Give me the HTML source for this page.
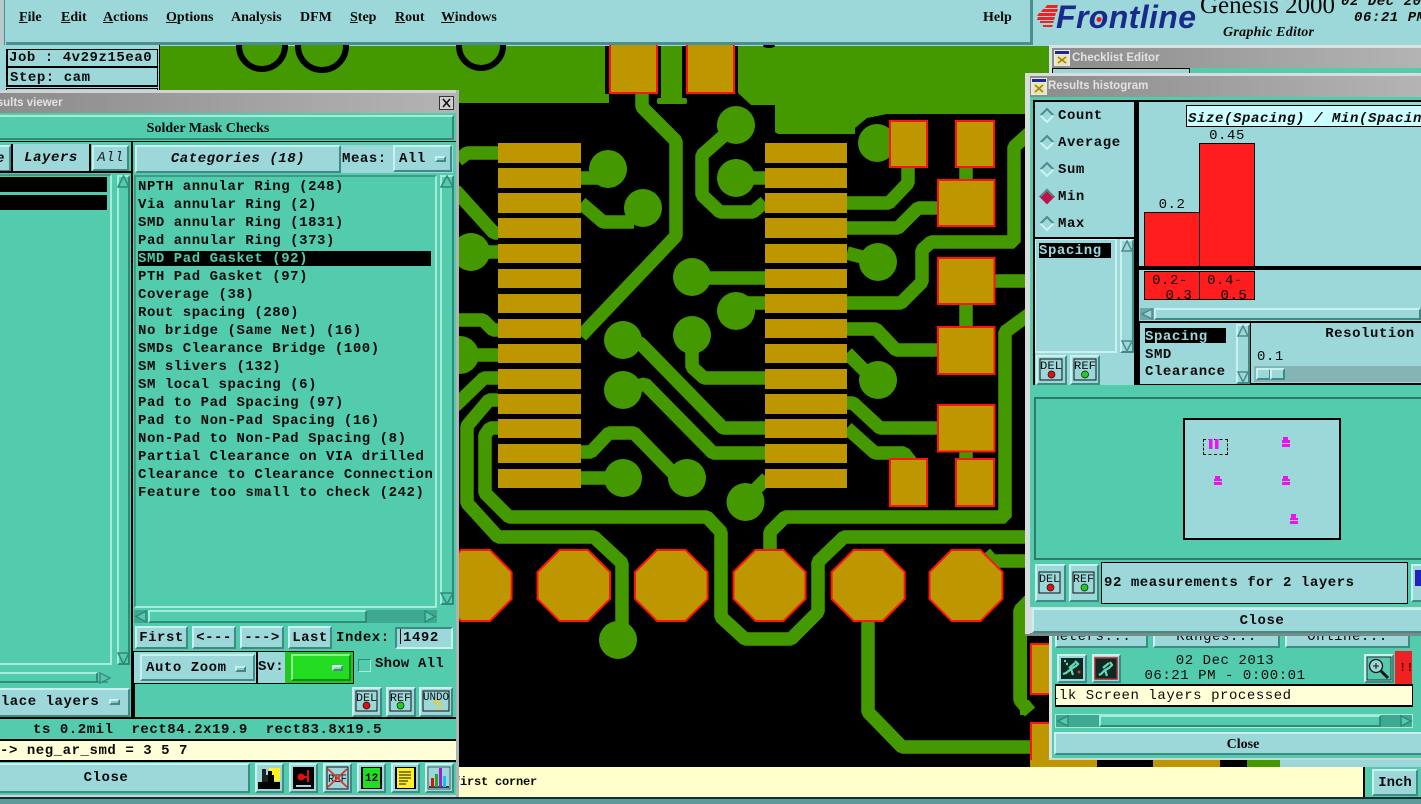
<!DOCTYPE html>
<html><head><meta charset="utf-8"><title>Genesis 2000</title>
<style>
html,body{margin:0;padding:0;background:#9cd8d9}
#p{position:relative;width:1421px;height:804px;overflow:hidden;background:#9cd8d9}
#p div,#p svg{position:absolute;box-sizing:border-box}
.t{font:bold 14px/18px "Liberation Mono",monospace;letter-spacing:.55px;white-space:pre;color:#0a0a0a}
.n{font-weight:normal}
.i{font-style:italic}
.s{font:bold 14px/18px "Liberation Serif",serif;white-space:pre;color:#0a0a0a}
.r{border:2px solid;border-color:#c9f1ef #3f8a84 #3f8a84 #c9f1ef;background:#9cd8d9}
.rm{border:2px solid;border-color:#a5ebd8 #2f8a78 #2f8a78 #a5ebd8;background:#53cbad}
.L{background:#9cd8d9}.M{background:#53cbad}.K{background:#000}
.c{text-align:center}
.title{background:linear-gradient(90deg,#8c8c8c,#b4b4b4);font:bold 11.5px/20px "Liberation Sans",sans-serif;color:#e2e2e2;white-space:pre}
u{text-decoration:underline}
</style></head><body><div id="p">

<!-- PCB -->
<svg style="left:0;top:0" width="1421" height="804" viewBox="0 0 1421 804">
<rect x="160" y="46" width="1261" height="722" fill="#000"/>
<path d="M160 46H609V103H160Z" fill="#449900"/>
<path d="M738 46H1060V114H887L867 118L855 128V134H778L775 132V105H751L738 93Z" fill="#449900"/>
<rect x="605" y="46" width="133" height="48" fill="#000"/>
<rect x="661" y="46" width="21" height="55" fill="#449900"/>
<rect x="657" y="98" width="30" height="6" rx="2" fill="#449900"/>
<g fill="#449900" stroke="#000" stroke-width="6"><circle cx="262" cy="46" r="23"/><circle cx="322" cy="46" r="24"/><circle cx="481" cy="46" r="22"/></g>
<ellipse cx="769" cy="46" rx="6" ry="2" fill="#000"/>
<g fill="none" stroke="#449900" stroke-width="13.500" stroke-linejoin="bevel">
<path d="M642 90V107L676 141V236L581 336"/>
<path d="M498 153H467L458 160"/>
<path d="M581 178H608"/>
<path d="M581 203L603 222H634"/>
<path d="M728 132L702 155V195L720 212H753L765 202"/>
<path d="M736 178H765"/>
<path d="M455 190L494 233H498"/>
<path d="M471 252H498"/>
<path d="M455 320H483L493 330H498"/>
<path d="M460 355H498"/>
<path d="M498 378H484L455 406"/>
<path d="M498 400H489L467 426V503L498 537H594L622 563V640"/>
<path d="M498 428H490L485 435V493L509 517H707L721 532V617L745 639H791L818 612V562L844 537H1040"/>
<path d="M581 452H591L609 433H634L675 475L687 478"/>
<path d="M581 478H624"/>
<path d="M745 502L755 490L767 478"/>
<path d="M623 340L640 343L723 428H765"/>
<path d="M623 390L645 384L713 453H765"/>
<path d="M692 278H765"/>
<path d="M736 311L748 303H765"/>
<path d="M692 335V367L704 378H765"/>
<path d="M908 160V183L889 203H847"/>
<path d="M966 160V190"/>
<path d="M966 300V330"/>
<path d="M966 445V465"/>
<path d="M847 228H898L918 208H940"/>
<path d="M1035 128L1014 147V242H931L922 250V282L901 303H847"/>
<path d="M847 253L862 257L878 262"/>
<path d="M990 281H1040"/>
<path d="M847 353L867 373L878 380"/>
<path d="M847 329H876L896 350H940"/>
<path d="M847 403H853L880 428H940"/>
<path d="M847 428L875 453H904L911 462"/>
<path d="M1035 310L1005 332V517H785L770 532V555"/>
<path d="M868 615V712L902 747H1040"/>
<path d="M985 553L992 561H1040"/>
<path d="M1030 600L1020 610V700L1030 712"/>
</g>
<g fill="#449900">
<circle cx="608" cy="169" r="19"/><circle cx="643" cy="208" r="19"/><circle cx="736" cy="125" r="19"/><circle cx="736" cy="178" r="19"/>
<circle cx="471" cy="252" r="19"/><circle cx="460" cy="355" r="19"/><circle cx="692" cy="277" r="19"/><circle cx="736" cy="311" r="19"/>
<circle cx="623" cy="340" r="19"/><circle cx="692" cy="335" r="19"/><circle cx="623" cy="390" r="19"/><circle cx="623" cy="478" r="19"/>
<circle cx="687" cy="478" r="19"/><circle cx="745.5" cy="502" r="19"/><circle cx="618" cy="640" r="19"/><circle cx="877" cy="143" r="19"/>
<circle cx="878" cy="262" r="19"/><circle cx="878" cy="380" r="19"/>
</g>
<g fill="#bd9600">
<rect x="498" y="143" width="83" height="20"/><rect x="498" y="168" width="83" height="20"/><rect x="498" y="193" width="83" height="20"/><rect x="498" y="218" width="83" height="20"/><rect x="498" y="244" width="83" height="19"/><rect x="498" y="269" width="83" height="19"/><rect x="498" y="294" width="83" height="19"/><rect x="498" y="319" width="83" height="19"/><rect x="498" y="344" width="83" height="19"/><rect x="498" y="369" width="83" height="20"/><rect x="498" y="394" width="83" height="20"/><rect x="498" y="419" width="83" height="19"/><rect x="498" y="444" width="83" height="19"/><rect x="498" y="469" width="83" height="19"/>
<rect x="765" y="143" width="82" height="20"/><rect x="765" y="168" width="82" height="20"/><rect x="765" y="193" width="82" height="20"/><rect x="765" y="218" width="82" height="20"/><rect x="765" y="244" width="82" height="19"/><rect x="765" y="269" width="82" height="19"/><rect x="765" y="294" width="82" height="19"/><rect x="765" y="319" width="82" height="19"/><rect x="765" y="344" width="82" height="19"/><rect x="765" y="369" width="82" height="20"/><rect x="765" y="394" width="82" height="20"/><rect x="765" y="419" width="82" height="19"/><rect x="765" y="444" width="82" height="19"/><rect x="765" y="469" width="82" height="19"/>
</g>
<g fill="#bd9600" stroke="#ff1212" stroke-width="2">
<rect x="610" y="40" width="47" height="53"/><rect x="687" y="40" width="47" height="53"/>
<rect x="890" y="121" width="37" height="46"/><rect x="956" y="121" width="38" height="46"/>
<rect x="938" y="180" width="56.5" height="46"/><rect x="938" y="258" width="56.5" height="46"/><rect x="938" y="327" width="56.5" height="47"/><rect x="938" y="405" width="56.5" height="46.500"/>
<rect x="890" y="459" width="37" height="47"/><rect x="956" y="459" width="38" height="47"/>
<path d="M439 572L461 550H490L511.600 572V599L490 621H461L439 599Z"/>
<path d="M537.500 572L559.500 550H588L610 572V599L588 621H559.500L537.500 599Z"/>
<path d="M635 572L657 550H685.600L707.600 572V599L685.600 621H657L635 599Z"/>
<path d="M733.500 572L755.500 550H783.500L805.500 572V599L783.500 621H755.500L733.500 599Z"/>
<path d="M831.600 572L853.600 550H882.700L904.700 572V599L882.700 621H853.600L831.600 599Z"/>
<path d="M929.500 572L951.500 550H980.500L1002.500 572V599L980.500 621H951.500L929.500 599Z"/>
</g>
<rect x="1020" y="630" width="7" height="85" fill="#449900"/>
<rect x="1027" y="640" width="30" height="60" fill="#000"/>
<rect x="1031" y="644" width="30" height="50" fill="#bd9600" stroke="#ff1212" stroke-width="2"/>
<rect x="1031" y="723" width="30" height="50" fill="#bd9600" stroke="#ff1212" stroke-width="2"/>
<rect x="1030" y="760" width="67" height="8" fill="#bd9600"/><rect x="1153" y="760" width="67" height="8" fill="#bd9600"/><rect x="1247" y="760" width="33" height="8" fill="#449900"/><rect x="1280" y="760" width="141" height="8" fill="#9cd8d9"/>
</svg>

<!-- Menu bar -->
<div class="L" style="left:0;top:0;width:1421px;height:45px"></div>
<div style="left:0;top:0;width:5px;height:46px;background:#b9c9c9;border-right:1px solid #4a8f8e"></div>
<div style="left:6px;top:42px;width:1024px;height:3px;background:#4a8f8e"></div>
<div style="left:1030px;top:0;width:3px;height:45px;background:#4a8f8e"></div>
<div class="s" style="left:19px;top:9px"><u>F</u>ile</div>
<div class="s" style="left:61px;top:9px"><u>E</u>dit</div>
<div class="s" style="left:103px;top:9px"><u>A</u>ctions</div>
<div class="s" style="left:166px;top:9px"><u>O</u>ptions</div>
<div class="s" style="left:231px;top:9px">Analysis</div>
<div class="s" style="left:300px;top:9px">DFM</div>
<div class="s" style="left:350px;top:9px"><u>S</u>tep</div>
<div class="s" style="left:395px;top:9px"><u>R</u>out</div>
<div class="s" style="left:441px;top:9px"><u>W</u>indows</div>
<div class="s" style="left:983px;top:9px">Help</div>

<svg style="left:1033px;top:0" width="388" height="45" viewBox="1033 0 388 45">
<g fill="#ee2222"><path d="M1047 5H1058L1057 8H1045Z"/><path d="M1043 9H1058L1057 12H1041Z"/><path d="M1039 13H1056L1055 16H1037Z"/><path d="M1038 17H1055L1054 20H1037Z"/><path d="M1040 21H1054L1053 23H1040Z"/><path d="M1043 25H1053L1052 27H1043Z"/></g>
<text x="1056" y="28" font-family="Liberation Sans" font-weight="bold" font-style="italic" font-size="32" fill="#1a2a8c" textLength="140">Frontline</text>
<circle cx="1099" cy="19.500" r="2.500" fill="#e81818"/>
<text x="1200" y="13" font-family="Liberation Serif" font-size="25" fill="#0a0a0a" textLength="135">Genesis 2000</text>
<text x="1223" y="36" font-family="Liberation Serif" font-weight="bold" font-style="italic" font-size="14" fill="#0a0a0a" textLength="91">Graphic Editor</text>
<text x="1341" y="5" font-family="Liberation Mono" font-weight="bold" font-style="italic" font-size="14" fill="#0a0a0a" letter-spacing=".55">02 Dec 2013</text>
<text x="1354" y="21" font-family="Liberation Mono" font-weight="bold" font-style="italic" font-size="14" fill="#0a0a0a" letter-spacing=".55">06:21 PM</text>
</svg>

<!-- Job box -->
<div class="L" style="left:0;top:45px;width:160px;height:50px;border-right:1px solid #000"></div>
<div style="left:6px;top:49px;width:152px;height:38px;border:1px solid #000;background:#000"></div>
<div class="L" style="left:8px;top:50px;width:149px;height:16px"></div>
<div class="L" style="left:8px;top:68px;width:149px;height:17px"></div>
<div class="t" style="left:9px;top:49px">Job : 4v29z15ea0</div>
<div class="t" style="left:10px;top:69px">Step: cam</div>
<div style="left:6px;top:88px;width:152px;height:5px;border:1px solid #000"></div>

<!-- Bottom bar -->
<div style="left:459px;top:767px;width:904px;height:30px;background:#ffffcc;border-right:0"></div>
<div class="t" style="left:453px;top:773px;font-size:12px;letter-spacing:-.2px">first corner</div>
<div class="K" style="left:1363px;top:767px;width:2px;height:31px"></div>
<div class="M" style="left:1365px;top:767px;width:56px;height:31px"></div>
<div class="r t c" style="left:1372px;top:769px;width:46px;height:27px;line-height:25px;letter-spacing:0">Inch</div>
<div style="left:0;top:797px;width:1421px;height:2px;background:#14302e"></div>
<div style="left:0;top:799px;width:1421px;height:5px;background:#5f9a9a"></div>

<!-- Results viewer window -->
<div style="left:0;top:90px;width:459px;height:707px;background:#d2d2d2;border-right:3px solid #aeb4b4"></div>
<div class="title" style="left:0;top:93px;width:456px;height:20px;line-height:20px"> </div>
<div class="title" style="left:-18px;top:93px;width:100px;height:20px;background:none">Results viewer</div>
<div style="left:439px;top:96px;width:15px;height:14px;background:#d0d0d0;border:1px solid #333"></div>
<svg style="left:439px;top:96px" width="15" height="14"><path d="M4 3L11 11M11 3L4 11" stroke="#111" stroke-width="1.6"/></svg>
<div class="M" style="left:0;top:113px;width:456px;height:682px"></div>
<div class="rm" style="left:-2px;top:115px;width:456px;height:25px"></div>
<div class="s c" style="left:0;top:120px;width:416px">Solder Mask Checks</div>
<div class="K" style="left:0;top:141px;width:456px;height:1px"></div>

<!-- left column -->
<div class="K" style="left:131px;top:142px;width:2px;height:576px"></div>
<div class="r" style="left:-8px;top:145px;width:19px;height:27px"></div>
<div class="t i" style="left:-4px;top:150px">e</div>
<div class="L t i c" style="left:13px;top:144px;width:76px;height:27px;line-height:29px">Layers</div>
<div class="r t i n c" style="left:92px;top:145px;width:37px;height:26px;line-height:23px;letter-spacing:.4px;color:#222">All</div>
<div class="K" style="left:0;top:171px;width:131px;height:2px"></div>
<div class="K" style="left:11px;top:144px;width:2px;height:28px"></div>
<div class="K" style="left:89px;top:144px;width:2px;height:28px"></div>
<div style="left:-3px;top:174px;width:115px;height:491px;border:2px solid;border-color:#3f9a88 #a5ebd8 #a5ebd8 #3f9a88"></div>
<div class="K" style="left:0;top:177px;width:107px;height:15px"></div>
<div class="K" style="left:0;top:195px;width:107px;height:15px"></div>
<div class="rm" style="left:117px;top:175px;width:13px;height:490px"></div>
<div style="left:0;top:671px;width:108px;height:12px;border-bottom:2px solid #3f9a88;background:#53cbad"></div>
<div class="rm" style="left:-4px;top:672px;width:102px;height:11px"></div>
<svg style="left:98px;top:672px" width="14" height="12"><path d="M2 1L12 6L2 11Z" fill="#53cbad" stroke="#3f8a84" stroke-width="1.500"/></svg>
<svg style="left:117px;top:175px" width="13" height="13"><path d="M6.500 1L12 12H1Z" fill="#53cbad" stroke="#2f8a78" stroke-width="1.500"/></svg>
<svg style="left:117px;top:652px" width="13" height="13"><path d="M6.500 12L12 1H1Z" fill="#53cbad" stroke="#2f8a78" stroke-width="1.500"/></svg>
<div class="r" style="left:-6px;top:688px;width:136px;height:29px"></div>
<div class="t" style="left:-26px;top:693px">Replace layers</div>
<div class="r" style="left:109px;top:699px;width:11px;height:6px;background:#8cc8c8"></div>

<!-- right column -->
<div class="L" style="left:341px;top:145px;width:112px;height:28px"></div>
<div class="r t i c" style="left:135px;top:145px;width:206px;height:28px;line-height:25px">Categories (18)</div>
<div class="t" style="left:342px;top:150px">Meas:</div>
<div class="r t" style="left:393px;top:145px;width:59px;height:27px;line-height:25px;padding-left:4px">All</div>
<div class="r" style="left:435px;top:156px;width:11px;height:6px;background:#8cc8c8"></div>
<div style="left:134px;top:175px;width:303px;height:433px;border:2px solid;border-color:#3f9a88 #a5ebd8 #a5ebd8 #3f9a88"></div>
<div class="K" style="left:138px;top:251px;width:293px;height:15px"></div>
<div style="left:138px;top:178px;width:294px;height:330px;overflow:hidden"><div class="t" style="left:0;top:0">NPTH annular Ring (248)
Via annular Ring (2)
SMD annular Ring (1831)
Pad annular Ring (373)
<span style="color:#53cbad">SMD Pad Gasket (92)</span>
PTH Pad Gasket (97)
Coverage (38)
Rout spacing (280)
No bridge (Same Net) (16)
SMDs Clearance Bridge (100)
SM slivers (132)
SM local spacing (6)
Pad to Pad Spacing (97)
Pad to Non-Pad Spacing (16)
Non-Pad to Non-Pad Spacing (8)
Partial Clearance on VIA drilled
Clearance to Clearance Connection
Feature too small to check (242)</div></div>
<div class="rm" style="left:440px;top:175px;width:14px;height:430px"></div>
<svg style="left:440px;top:175px" width="14" height="13"><path d="M7 1L13 12H1Z" fill="#53cbad" stroke="#2f8a78" stroke-width="1.500"/></svg>
<svg style="left:440px;top:592px" width="14" height="13"><path d="M7 12L13 1H1Z" fill="#53cbad" stroke="#2f8a78" stroke-width="1.500"/></svg>
<div style="left:134px;top:610px;width:303px;height:13px;background:#3fa892"></div>
<div class="rm" style="left:148px;top:610px;width:219px;height:13px"></div>
<svg style="left:134px;top:610px" width="14" height="13"><path d="M12 1L2 6.500L12 12Z" fill="#53cbad" stroke="#2f8a78" stroke-width="1.500"/></svg>
<svg style="left:423px;top:610px" width="14" height="13"><path d="M2 1L12 6.500L2 12Z" fill="#53cbad" stroke="#2f8a78" stroke-width="1.500"/></svg>
<div class="r t c" style="left:135px;top:626px;width:53px;height:23px;line-height:21px;letter-spacing:.5px">First</div>
<div class="r t c" style="left:192px;top:626px;width:44px;height:23px;line-height:21px;letter-spacing:.5px">&lt;---</div>
<div class="r t c" style="left:240px;top:626px;width:44px;height:23px;line-height:21px;letter-spacing:.5px">---&gt;</div>
<div class="r t c" style="left:288px;top:626px;width:44px;height:23px;line-height:21px;letter-spacing:.5px">Last</div>
<div class="t" style="left:336px;top:629px">Index:</div>
<div class="L" style="left:395px;top:627px;width:58px;height:22px;border:2px solid;border-color:#3f8a84 #c9f1ef #c9f1ef #3f8a84"></div>
<div class="t" style="left:403px;top:629px">1492</div>
<div style="left:400px;top:629px;width:1px;height:15px;background:#111"></div>

<div class="K" style="left:133px;top:651px;width:221px;height:33px"></div>
<div class="L" style="left:134px;top:652px;width:122px;height:31px"></div>
<div class="r t" style="left:140px;top:654px;width:115px;height:27px;line-height:25px;padding-left:4px">Auto Zoom</div>
<div class="r" style="left:235px;top:666px;width:11px;height:6px;background:#8cc8c8"></div>
<div class="L t" style="left:258px;top:652px;width:27px;height:31px;line-height:31px;letter-spacing:.2px">Sv:</div>
<div style="left:285px;top:652px;width:68px;height:31px;background:#22c822"></div>
<div style="left:291px;top:654px;width:60px;height:27px;background:#22dd22;border:2px solid;border-color:#90ee90 #178a17 #178a17 #90ee90"></div>
<div class="r" style="left:332px;top:665px;width:11px;height:6px;background:#9cd8a0"></div>
<div style="left:358px;top:659px;width:13px;height:13px;border:1px solid;border-color:#2f8a78 #a5ebd8 #a5ebd8 #2f8a78"></div>
<div class="t" style="left:375px;top:655px;letter-spacing:.2px">Show All</div>

<!-- DEL REF UNDO -->
<div class="K" style="left:133px;top:684px;width:2px;height:34px"></div>
<div class="r" style="left:352px;top:687px;width:30px;height:30px"></div>
<div class="r" style="left:386px;top:687px;width:30px;height:30px"></div>
<div class="r" style="left:419px;top:687px;width:34px;height:30px"></div>
<svg style="left:352px;top:687px" width="102" height="30" viewBox="352 687 102 30" font-family="Liberation Mono" font-size="11" fill="#111">
<rect x="356" y="691" width="21" height="20" fill="none" stroke="#111"/><text x="356" y="701" textLength="21" lengthAdjust="spacingAndGlyphs">DEL</text><circle cx="366.500" cy="705.500" r="3.500" fill="#e01010" stroke="#111" stroke-width=".7"/>
<rect x="390" y="691" width="21" height="20" fill="none" stroke="#111"/><text x="390" y="701" textLength="21" lengthAdjust="spacingAndGlyphs">REF</text><circle cx="400.500" cy="705.500" r="3.500" fill="#22cc22" stroke="#111" stroke-width=".7"/>
<rect x="423" y="691" width="26" height="20" fill="none" stroke="#111"/><text x="423" y="700" textLength="26" lengthAdjust="spacingAndGlyphs">UNDO</text><path d="M439 702H434L436 700M434 702L436 704M439 702C442 702 442 707 439 707L436 710" fill="none" stroke="#eecc22" stroke-width="1.500"/>
</svg>

<!-- status rows -->
<div class="K" style="left:0;top:717px;width:456px;height:2px"></div>
<div class="t" style="left:33px;top:721px">ts 0.2mil  rect84.2x19.9  rect83.8x19.5</div>
<div class="K" style="left:0;top:739px;width:456px;height:2px"></div>
<div style="left:0;top:741px;width:456px;height:19px;background:#ffffd8"></div>
<div class="t" style="left:0;top:742px">-&gt; neg_ar_smd = 3 5 7</div>
<div class="K" style="left:0;top:760px;width:456px;height:2px"></div>
<div class="r" style="left:-6px;top:763px;width:256px;height:30px"></div>
<div class="t c" style="left:0;top:769px;width:212px">Close</div>

<!-- Bottom icon row -->
<div class="r" style="left:255px;top:763px;width:29px;height:30px"></div>
<div class="r" style="left:289px;top:763px;width:29px;height:30px"></div>
<div class="r" style="left:323px;top:763px;width:29px;height:30px"></div>
<div class="r" style="left:357px;top:763px;width:29px;height:30px"></div>
<div class="r" style="left:391px;top:763px;width:29px;height:30px"></div>
<div class="r" style="left:425px;top:763px;width:29px;height:30px"></div>
<svg style="left:255px;top:763px" width="199" height="30" viewBox="255 763 199 30">
<rect x="258" y="768" width="22" height="21" fill="#9cd8d9"/><rect x="269" y="768" width="11" height="13" fill="#ffee22"/><rect x="258" y="782" width="22" height="7" fill="#000"/><path d="M262 769H266V775H268V782H262Z" fill="#222"/><path d="M268 771H272V775H274V782H268Z" fill="#000"/>
<rect x="293" y="767" width="21" height="22" fill="#000"/><circle cx="301" cy="777" r="3.500" fill="#e01010"/><rect x="304" y="776" width="3" height="2" fill="#e01010"/><rect x="307" y="770" width="2" height="12" fill="#e01010"/><rect x="296" y="785" width="15" height="2" fill="#9cd8d9"/>
<rect x="327" y="767" width="21" height="22" fill="#9cd8d9" stroke="#111"/><text x="328" y="782" font-family="Liberation Mono" font-size="11" fill="#111" textLength="19" lengthAdjust="spacingAndGlyphs">REF</text><path d="M328 769L347 787M347 769L328 787" stroke="#e03030" stroke-width="1.800"/>
<rect x="361" y="767" width="21" height="22" fill="#000"/><rect x="363" y="768" width="17" height="20" fill="#22dd22"/><text x="365" y="781" font-family="Liberation Mono" font-weight="bold" font-size="11" fill="#000">12</text>
<rect x="395" y="767" width="21" height="22" fill="#000"/><rect x="397" y="768" width="17" height="20" fill="#ffee22"/><path d="M399 772H411M399 775H411M399 778H411M399 781H408M399 784H406" stroke="#111"/>
<path d="M429 787H449" stroke="#111" stroke-width="1.500"/><rect x="431" y="778" width="3" height="9" fill="#e01010"/><rect x="435" y="774" width="3" height="13" fill="#22aa22"/><rect x="439" y="768" width="3" height="19" fill="#9922cc"/><rect x="443" y="776" width="3" height="11" fill="#22bbee"/><rect x="428" y="767" width="22" height="22" fill="none" stroke="#111" stroke-width=".6"/>
</svg>

<!-- Checklist Editor window -->
<div style="left:1049px;top:45px;width:372px;height:715px;background:#d8e4e4"></div>
<div class="title" style="left:1052px;top:48px;width:369px;height:20px;padding-left:20px">Checklist Editor</div>
<div class="M" style="left:1052px;top:68px;width:369px;height:690px"></div>
<div style="left:1052px;top:68px;width:138px;height:6px;background:#9cd8d9;border:1px solid #000;border-bottom:0"></div>
<svg style="left:1054px;top:50px" width="16" height="16"><rect width="16" height="16" fill="#e8e8e8"/><rect x="1" y="1" width="14" height="3" fill="#1a2a8c"/><rect x="2" y="5" width="12" height="10" fill="#e8e8a0"/><path d="M4 7L12 13M12 7L4 13" stroke="#a08020" stroke-width="1.500"/></svg>

<!-- Checklist lower part -->
<div class="r" style="left:1055px;top:625px;width:93px;height:23px;overflow:hidden"><div class="t n" style="left:-42px;top:1px">Parameters...</div></div>
<div class="r t n c" style="left:1153px;top:625px;width:127px;height:23px;line-height:20px">Ranges...</div>
<div class="r t n c" style="left:1285px;top:625px;width:125px;height:23px;line-height:20px">Online...</div>
<div class="t n c" style="left:1090px;top:652px;width:270px">02 Dec 2013</div>
<div class="t n c" style="left:1090px;top:667px;width:270px">06:21 PM - 0:00:01</div>
<div class="r" style="left:1057px;top:654px;width:30px;height:29px"></div>
<div class="r" style="left:1092px;top:654px;width:29px;height:29px"></div>
<svg style="left:1057px;top:654px" width="64" height="29" viewBox="1057 654 64 29">
<rect x="1061" y="658" width="22" height="21" fill="#0c2a22"/><path d="M1075 661l3 3-2 2-5 3 2 6M1071 669l-5 4-3 1M1069 668l6-5M1064 661h2M1066 664h2" fill="none" stroke="#66d8b8" stroke-width="2.200"/><circle cx="1079" cy="672" r="1.500" fill="#e03030"/>
<rect x="1095" y="658" width="22" height="21" fill="#0c2a22" stroke="#b02020" stroke-width="1.500"/><path d="M1110 662l2 3-3 3-4 2 2 6M1105 670l-4 4-2 1M1103 668l6-5" fill="none" stroke="#66d8b8" stroke-width="2.200"/>
</svg>
<div class="r" style="left:1364px;top:654px;width:30px;height:29px"></div>
<svg style="left:1364px;top:654px" width="30" height="29" viewBox="0 0 30 29"><rect x="3" y="3" width="24" height="23" fill="#53cbad" stroke="#111" stroke-width=".8"/><circle cx="12" cy="12" r="6.500" fill="#9cd8d9" stroke="#111" stroke-width="1.300"/><path d="M9 12H15M12 9V15" stroke="#111"/><path d="M17 17L24 24" stroke="#111" stroke-width="3"/></svg>
<div style="left:1395px;top:651px;width:17px;height:34px;background:#ee2222"></div>
<div class="t" style="left:1399px;top:659px;color:#600;letter-spacing:0;font-size:12px">!!</div>
<div class="K" style="left:1055px;top:684px;width:358px;height:23px"></div>
<div style="left:1056px;top:686px;width:356px;height:19px;background:#ffffd8;overflow:hidden"><div class="t n" style="left:-15px;top:1px">Silk Screen layers processed</div></div>
<div style="left:1055px;top:714px;width:358px;height:14px;background:#3fa892;border:1px solid #a5ebd8"></div>
<div class="rm" style="left:1099px;top:715px;width:282px;height:12px"></div>
<svg style="left:1056px;top:714px" width="14" height="14"><path d="M12 2L2 7L12 12Z" fill="#53cbad" stroke="#2f8a78" stroke-width="1.500"/></svg>
<svg style="left:1399px;top:714px" width="14" height="14"><path d="M2 2L12 7L2 12Z" fill="#53cbad" stroke="#2f8a78" stroke-width="1.500"/></svg>
<div class="r" style="left:1054px;top:732px;width:378px;height:23px"></div>
<div class="s c" style="left:1054px;top:736px;width:378px">Close</div>
<div style="left:1050px;top:758px;width:371px;height:2px;background:#c8d8d8"></div>

<!-- Results histogram window -->
<div style="left:1025px;top:73px;width:396px;height:563px;background:#d8dcdc;border-bottom:2px solid #808080"></div>
<div class="title" style="left:1030px;top:76px;width:391px;height:21px;padding-left:18px">Results histogram</div>
<svg style="left:1031px;top:78px" width="16" height="17"><rect width="16" height="17" fill="#e8e8e8"/><rect x="1" y="1" width="14" height="3" fill="#1a2a8c"/><rect x="2" y="5" width="12" height="11" fill="#e8e8a0"/><path d="M4 7L12 14M12 7L4 14" stroke="#a08020" stroke-width="1.500"/></svg>
<div class="M" style="left:1030px;top:97px;width:391px;height:510px"></div>
<div class="K" style="left:1033px;top:100px;width:388px;height:285px"></div>
<div class="L" style="left:1035px;top:102px;width:99px;height:135px"></div>
<div class="t" style="left:1058px;top:107px">Count</div>
<div class="t" style="left:1058px;top:134px">Average</div>
<div class="t" style="left:1058px;top:161px">Sum</div>
<div class="t" style="left:1058px;top:188px">Min</div>
<div class="t" style="left:1058px;top:215px">Max</div>
<svg style="left:1038px;top:106px" width="20" height="130" viewBox="0 0 20 130">
<g stroke-width="2"><g fill="none"><path d="M2.500 9.500L9 3L15.500 9.500" stroke="#4f8a88"/><path d="M2.500 9.500L9 16L15.500 9.500" stroke="#cdf2f0"/>
<path d="M2.500 36.500L9 30L15.500 36.500" stroke="#4f8a88"/><path d="M2.500 36.500L9 43L15.500 36.500" stroke="#cdf2f0"/>
<path d="M2.500 63.500L9 57L15.500 63.500" stroke="#4f8a88"/><path d="M2.500 63.500L9 70L15.500 63.500" stroke="#cdf2f0"/>
<path d="M2.500 117.500L9 111L15.500 117.500" stroke="#4f8a88"/><path d="M2.500 117.500L9 124L15.500 117.500" stroke="#cdf2f0"/></g>
<path d="M2.500 90.500L9 84L15.500 90.500L9 97Z" fill="#c01048" stroke="#c01048"/><path d="M2.500 90.500L9 84L15.500 90.500" stroke="#4f8a88" fill="none"/></g>
</svg>
<div class="L" style="left:1035px;top:239px;width:99px;height:146px"></div>
<div style="left:1035px;top:239px;width:82px;height:114px;border:1px solid #c9f1ef;border-right-width:2px;border-bottom-width:2px"></div>
<div class="K" style="left:1039px;top:243px;width:72px;height:15px"></div>
<div class="t" style="left:1039px;top:242px;color:#9cd8d9">Spacing</div>
<div class="r" style="left:1120px;top:239px;width:14px;height:114px"></div>
<svg style="left:1120px;top:239px" width="14" height="114"><path d="M7 2L12 12H2Z" fill="#9cd8d9" stroke="#4f8a88" stroke-width="1.500"/><path d="M7 112L12 102H2Z" fill="#9cd8d9" stroke="#4f8a88" stroke-width="1.500"/></svg>
<div class="r" style="left:1036px;top:355px;width:31px;height:30px"></div>
<div class="r" style="left:1070px;top:355px;width:30px;height:30px"></div>
<svg style="left:1036px;top:355px" width="64" height="30" viewBox="1036 355 64 30" font-family="Liberation Mono" font-size="11" fill="#111">
<rect x="1040" y="359" width="22" height="21" fill="none" stroke="#111"/><text x="1040" y="369" textLength="22" lengthAdjust="spacingAndGlyphs">DEL</text><circle cx="1051.500" cy="374.500" r="3.500" fill="#e01010" stroke="#111" stroke-width=".7"/>
<rect x="1074" y="359" width="22" height="21" fill="none" stroke="#111"/><text x="1074" y="369" textLength="22" lengthAdjust="spacingAndGlyphs">REF</text><circle cx="1085" cy="374.500" r="3.500" fill="#22cc22" stroke="#111" stroke-width=".7"/>
</svg>

<!-- chart -->
<div class="L" style="left:1139px;top:102px;width:282px;height:219px"></div>
<div style="left:1186px;top:105px;width:240px;height:22px;background:#ccffff;border:1px solid #000;border-right:0;overflow:hidden"></div>
<div class="t i" style="left:1188px;top:110px;letter-spacing:.6px">Size(Spacing) / Min(Spacin</div>
<div style="left:1144px;top:212px;width:56px;height:56px;background:#ff1c1c;border:1px solid #000"></div>
<div style="left:1199px;top:143px;width:56px;height:125px;background:#ff1c1c;border:1px solid #000"></div>
<div class="t n c" style="left:1144px;top:196px;width:56px">0.2</div>
<div class="t n c" style="left:1199px;top:127px;width:56px">0.45</div>
<div class="K" style="left:1139px;top:266px;width:282px;height:4px"></div>
<div style="left:1144px;top:271px;width:56px;height:29px;background:#ff1c1c;border:1px solid #000;overflow:hidden"></div>
<div style="left:1199px;top:271px;width:56px;height:29px;background:#ff1c1c;border:1px solid #000;overflow:hidden"></div>
<div class="t n c" style="left:1144px;top:274px;width:52px;line-height:15px;height:25px;overflow:hidden">0.2-
  0.3</div>
<div class="t n c" style="left:1199px;top:274px;width:52px;line-height:15px;height:25px;overflow:hidden">0.4-
  0.5</div>
<div style="left:1140px;top:308px;width:281px;height:12px;background:#6fa8a8"></div>
<div class="r" style="left:1154px;top:308px;width:267px;height:12px"></div>
<svg style="left:1140px;top:308px" width="14" height="12"><path d="M12 1L2 6L12 11Z" fill="#9cd8d9" stroke="#4f8a88" stroke-width="1.500"/></svg>
<div class="L" style="left:1140px;top:323px;width:110px;height:61px"></div>
<div class="K" style="left:1145px;top:328px;width:81px;height:15px"></div>
<div class="t" style="left:1145px;top:328px;color:#9cd8d9">Spacing</div>
<div class="t" style="left:1145px;top:346px">SMD</div>
<div class="t" style="left:1145px;top:363px">Clearance</div>
<div class="r" style="left:1236px;top:324px;width:14px;height:60px"></div>
<svg style="left:1236px;top:324px" width="14" height="60"><path d="M7 2L12 12H2Z" fill="#9cd8d9" stroke="#4f8a88" stroke-width="1.500"/><path d="M7 58L12 48H2Z" fill="#9cd8d9" stroke="#4f8a88" stroke-width="1.500"/></svg>
<div class="L" style="left:1251px;top:323px;width:170px;height:60px"></div>
<div class="t c" style="left:1300px;top:325px;width:140px;letter-spacing:.55px">Resolution</div>
<div class="t n" style="left:1257px;top:348px">0.1</div>
<div style="left:1254px;top:366px;width:167px;height:16px;background:#85b4b4"></div>
<div class="r" style="left:1256px;top:368px;width:15px;height:12px"></div>
<div class="r" style="left:1270px;top:368px;width:15px;height:12px"></div>

<!-- map -->
<div style="left:1034px;top:397px;width:387px;height:163px;border:2px solid #2f7a68;border-right:0;background:#53cbad"></div>
<div class="L" style="left:1183px;top:418px;width:158px;height:122px;border:2px solid #000"></div>
<div style="left:1203px;top:439px;width:25px;height:16px;border:1px dashed #111"></div>
<svg style="left:1183px;top:418px" width="158" height="122" viewBox="1183 418 158 122" fill="#f010f0">
<rect x="1209" y="439" width="3.500" height="10"/><rect x="1215" y="439" width="3.500" height="10"/>
<path d="M1283 437H1288V440H1290V443H1282V440H1283ZM1282 444H1290V447H1282Z"/>
<path d="M1215 476H1220V479H1222V481H1214V479H1215ZM1214 482H1222V485H1214Z"/>
<path d="M1283 476H1288V479H1290V481H1282V479H1283ZM1282 482H1290V485H1282Z"/>
<path d="M1291 514H1296V518H1298V520H1290V518H1291ZM1290 521H1298V524H1290Z"/>
</svg>

<!-- bottom row histogram -->
<div class="r" style="left:1035px;top:564px;width:31px;height:38px"></div>
<div class="r" style="left:1069px;top:564px;width:30px;height:38px"></div>
<svg style="left:1035px;top:564px" width="64" height="38" viewBox="1035 564 64 38" font-family="Liberation Mono" font-size="11" fill="#111">
<rect x="1039" y="572" width="21" height="21" fill="none" stroke="#111"/><text x="1039" y="582" textLength="21" lengthAdjust="spacingAndGlyphs">DEL</text><circle cx="1050.500" cy="587.500" r="3.500" fill="#e01010" stroke="#111" stroke-width=".7"/>
<rect x="1073" y="572" width="21" height="21" fill="none" stroke="#111"/><text x="1073" y="582" textLength="21" lengthAdjust="spacingAndGlyphs">REF</text><circle cx="1084.500" cy="587.500" r="3.500" fill="#22cc22" stroke="#111" stroke-width=".7"/>
</svg>
<div class="L" style="left:1101px;top:562px;width:307px;height:42px;border:1px solid #000"></div>
<div class="t" style="left:1104px;top:574px">92 measurements for 2 layers</div>
<div class="r" style="left:1411px;top:564px;width:14px;height:38px"></div>
<div style="left:1415px;top:570px;width:8px;height:16px;background:#2222bb"></div>
<div class="r t c" style="left:1032px;top:608px;width:460px;height:25px;line-height:23px">Close</div>
<div style="left:1030px;top:633px;width:391px;height:3px;background:#7a8a8a"></div>

</div></body></html>
